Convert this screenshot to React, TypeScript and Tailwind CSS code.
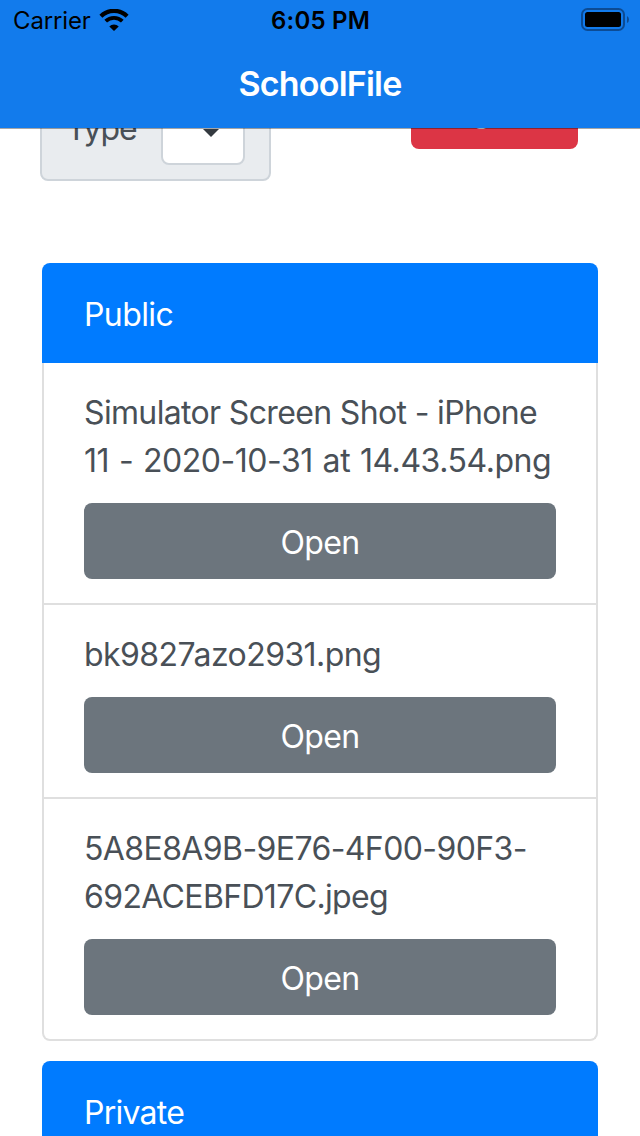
import React from "react";

type Line = { text: string; style: string };

const files: Line[][] = [
  [
    { text: "Simulator Screen Shot - iPhone", style: "tracking-[-0.65px]" },
    { text: "11 - 2020-10-31 at 14.43.54.png", style: "tracking-[-0.45px] [word-spacing:1.2px]" },
  ],
  [{ text: "bk9827azo2931.png", style: "tracking-[-0.57px]" }],
  [
    { text: "5A8E8A9B-9E76-4F00-90F3-", style: "tracking-[-0.6px]" },
    { text: "692ACEBFD17C.jpeg", style: "tracking-[-0.65px]" },
  ],
];

function StatusBar() {
  return (
    <div className="grid h-10 grid-cols-3 items-center text-[24px] leading-[38px] text-black">
      <div className="flex items-center gap-2 pl-[13px]">
        <span className="pt-[2px] tracking-[-0.15px]">Carrier</span>
        <svg width="30" height="22" viewBox="0 0 30 22" fill="none" stroke="black">
          <path d="M1.9 7.2a18.6 18.6 0 0 1 26.2 0" strokeWidth="4.2" />
          <path d="M6.7 12.2a11.8 11.8 0 0 1 16.6 0" strokeWidth="3.8" />
          <path d="M15 22l-4.7-4.6a6.7 6.7 0 0 1 9.4 0z" fill="black" stroke="none" />
        </svg>
      </div>
      <div className="whitespace-nowrap pl-px pt-[2px] text-center font-[560] tracking-[0.2px]">6:05 PM</div>
      <div className="flex justify-end pr-[11px]">
        <svg width="48" height="24" viewBox="0 0 48 24">
          <rect x="1" y="1" width="42" height="21" rx="5.5" fill="none" stroke="#0c4b94" strokeWidth="2" />
          <rect x="4" y="4" width="36" height="15" rx="2.5" fill="black" />
          <path d="M46 8q2 1 2 3.5T46 15z" fill="#0c4b94" />
        </svg>
      </div>
    </div>
  );
}

function FileItem({ lines }: { lines: Line[] }) {
  return (
    <div className="border-b-2 border-[#dfdfdf] px-10 pb-6 pt-[26px] last:border-b-0">
      <div className="whitespace-nowrap leading-[48px] text-[#495057]">
        {lines.map((l) => (
          <div key={l.text} className={l.style}>{l.text}</div>
        ))}
      </div>
      <button className="mt-[18px] block h-[76px] w-full rounded-lg bg-[#6c757d] pt-1 tracking-[-0.6px] text-white">
        Open
      </button>
    </div>
  );
}

export default function App() {
  return (
    <div className="flex h-[1136px] w-[640px] flex-col overflow-hidden bg-white font-['Inter',sans-serif] text-[32px]">
      <header className="h-32 shrink-0 bg-[#127bec]">
        <StatusBar />
        <h1 className="pt-5 text-center text-[34px] font-[570] leading-[48px] tracking-[-0.8px] text-white">
          SchoolFile
        </h1>
      </header>
      <main className="min-h-0 grow overflow-hidden">
        <div className="relative z-10 h-px bg-black/35" />
        <div className="-mt-[65px] flex items-start justify-between pl-10 pr-[62px] [clip-path:inset(64px_0_0_0)]">
          <div className="flex h-[117px] w-[231px] items-end rounded-lg border-2 border-[#ced4da] bg-[#e9ecef] pb-[14px] pl-[28px] pr-6">
            <span className="-ml-1 w-[95px] pb-3 leading-[48px] tracking-[-1.1px] text-[#495057]">Type</span>
            <div className="flex h-[76px] w-[84px] items-center justify-center rounded-lg border-2 border-[#ced4da] bg-white pb-px pl-[15px]">
              <svg width="16" height="20" viewBox="0 0 16 20" fill="#343a40">
                <path d="M0 8L8 0l8 8zM0 12h16l-8 8z" />
              </svg>
            </div>
          </div>
          <button className="mt-[9px] h-[76px] w-[167px] rounded-lg bg-[#dc3545] text-white">Log Out</button>
        </div>
        <section className="mx-[42px] mt-[82px]">
          <h2 className="h-[100px] rounded-t-lg bg-[#007bff] pl-[42px] pt-7 leading-[48px] tracking-[-0.6px] text-white">Public</h2>
          <div className="rounded-b-lg border-2 border-t-0 border-[#dfdfdf]">
            {files.map((lines) => (
              <FileItem key={lines[0].text} lines={lines} />
            ))}
          </div>
        </section>
        <section className="mx-[42px] mt-5">
          <h2 className="h-[100px] rounded-t-lg bg-[#007bff] pl-[42px] pt-7 leading-[48px] tracking-[-0.75px] text-white">Private</h2>
        </section>
      </main>
    </div>
  );
}
